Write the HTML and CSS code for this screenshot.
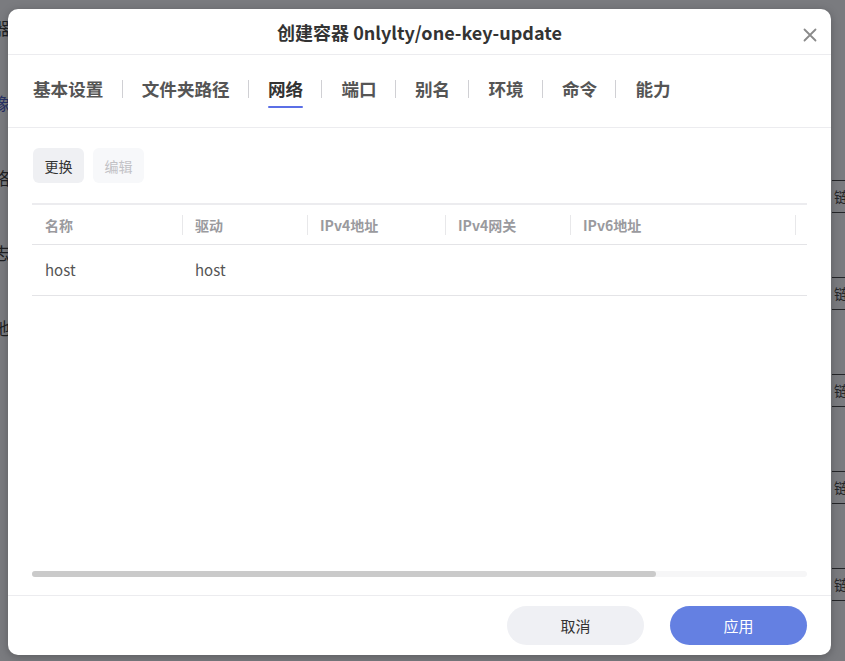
FILE: index.html
```html
<!DOCTYPE html>
<html lang="zh-CN">
<head>
<meta charset="utf-8">
<title>创建容器</title>
<link rel="stylesheet" href="styles.css">
</head>
<body>
<div class="page">
  <ul class="side">
    <li>容器</li>
    <li class="active">镜像</li>
    <li>网络</li>
    <li>日志</li>
    <li>本地</li>
  </ul>
  <div class="links">
    <span class="link">链接</span>
    <span class="link">链接</span>
    <span class="link">链接</span>
    <span class="link">链接</span>
    <span class="link">链接</span>
  </div>
</div>
<div class="mask"></div>
<div class="modal">
  <div class="modal-head">
    <h1 class="title">创建容器 0nlylty/one-key-update</h1>
    <button class="close" aria-label="关闭">
      <svg width="14" height="14" viewBox="0 0 14 14"><path d="M1.5 1.5 L12.5 12.5 M12.5 1.5 L1.5 12.5" stroke="#8a8a8a" stroke-width="1.8" fill="none" stroke-linecap="round"/></svg>
    </button>
  </div>
  <nav class="tabs">
    <span class="tab">基本设置</span><span class="sep"></span>
    <span class="tab">文件夹路径</span><span class="sep"></span>
    <span class="tab active">网络</span><span class="sep"></span>
    <span class="tab">端口</span><span class="sep"></span>
    <span class="tab">别名</span><span class="sep"></span>
    <span class="tab">环境</span><span class="sep"></span>
    <span class="tab">命令</span><span class="sep"></span>
    <span class="tab">能力</span>
  </nav>
  <div class="modal-body">
    <div class="toolbar">
      <button class="tbtn">更换</button>
      <button class="tbtn disabled">编辑</button>
    </div>
    <div class="scroller">
      <div class="viewport">
        <table class="grid">
          <colgroup>
            <col style="width:150px"><col style="width:125px"><col style="width:138px"><col style="width:125px"><col style="width:225px"><col style="width:200px">
          </colgroup>
          <thead>
            <tr>
              <th><span>名称</span></th>
              <th><span>驱动</span></th>
              <th><span>IPv4地址</span></th>
              <th><span>IPv4网关</span></th>
              <th><span>IPv6地址</span></th>
              <th><span>IPv6网关</span></th>
            </tr>
          </thead>
          <tbody>
            <tr>
              <td>host</td>
              <td>host</td>
              <td></td>
              <td></td>
              <td></td>
              <td></td>
            </tr>
          </tbody>
        </table>
      </div>
      <div class="hbar"><div class="thumb" style="width:80.5%"></div></div>
    </div>
  </div>
  <div class="modal-foot">
    <button class="btn cancel">取消</button>
    <button class="btn primary">应用</button>
  </div>
</div>
</body>
</html>
```
FILE: styles.css
```css
* { box-sizing: border-box; }
html, body { margin: 0; padding: 0; }
body {
  width: 845px;
  height: 661px;
  overflow: hidden;
  font-family: "Noto Sans CJK SC", "Noto Sans", sans-serif;
  background: #f4f5f7;
  position: relative;
}
.page {
  display: flex;
  justify-content: space-between;
  height: 661px;
}
.side {
  list-style: none;
  margin: 0;
  padding: 16px 0 0;
  width: 100px;
  margin-left: -90px;
  text-align: right;
  display: flex;
  flex-direction: column;
  gap: 51px;
  font-size: 17px;
  color: #111;
}
.side li { line-height: 24px; }
.side li.active { color: #2a3cb8; }
.links {
  display: flex;
  flex-direction: column;
  gap: 64px;
  padding-top: 180px;
  width: 13px;
}
.link {
  display: block;
  height: 33px;
  line-height: 31px;
  font-size: 15px;
  color: #222;
  border-top: 1px solid #222;
  border-bottom: 1px solid #222;
  white-space: nowrap;
  overflow: hidden;
  padding-left: 2px;
}
.mask {
  position: absolute;
  inset: 0;
  background: rgba(40, 41, 46, 0.6);
}
.modal {
  position: absolute;
  left: 8px;
  top: 9px;
  width: 823px;
  height: 646px;
  background: #fff;
  border-radius: 10px;
  display: flex;
  flex-direction: column;
  overflow: hidden;
  box-shadow: 0 2px 10px rgba(0,0,0,0.25);
}
.modal-head {
  height: 46px;
  border-bottom: 1px solid #ececef;
  display: flex;
  align-items: center;
  justify-content: center;
  position: relative;
  flex: none;
}
.title {
  margin: 0;
  font-size: 18px;
  font-weight: 700;
  color: #333;
  padding-top: 1px;
}
.close {
  position: absolute;
  right: 14px;
  top: 19px;
  width: 14px;
  height: 14px;
  padding: 0;
  border: 0;
  background: none;
  display: flex;
}
.tabs {
  height: 73px;
  border-bottom: 1px solid #ececef;
  display: flex;
  align-items: center;
  padding: 0 0 4px 25px;
  flex: none;
}
.tab {
  font-size: 17.6px;
  font-weight: 700;
  color: #555;
  line-height: 26px;
  position: relative;
}
.tab.active { color: #333; }
.tab.active::after {
  content: "";
  position: absolute;
  left: 0;
  right: 0;
  bottom: -6px;
  height: 2px;
  border-radius: 1px;
  background: #5b6fe6;
}
.sep {
  width: 1px;
  height: 18px;
  background: #d0d0d4;
  margin: 0 19px 0 18.3px;
}
.modal-body {
  flex: 1;
  display: flex;
  flex-direction: column;
  padding: 20px 24px 18px;
  min-height: 0;
  border-bottom: 1px solid #ececef;
}
.toolbar {
  display: flex;
  gap: 9px;
  padding-left: 1px;
  flex: none;
}
.tbtn {
  width: 51px;
  height: 35px;
  border: 0;
  border-radius: 6px;
  background: #eff0f3;
  color: #333;
  font-family: inherit;
  font-size: 14px;
  padding: 0;
}
.tbtn.disabled { background: #f7f8fa; color: #c2c2c6; }
.scroller {
  flex: 1;
  margin-top: 20px;
  display: flex;
  flex-direction: column;
  min-height: 0;
}
.viewport {
  flex: 1;
  overflow: hidden;
}
.hbar {
  height: 6px;
  flex: none;
  background: #f6f6f7;
  border-radius: 3px;
}
.thumb {
  height: 100%;
  background: #cacaca;
  border-radius: 3px;
}
.grid {
  border-collapse: collapse;
  table-layout: fixed;
  width: 963px;
  border-top: 2px solid #ececef;
}
.grid th {
  height: 40px;
  text-align: left;
  font-weight: 700;
  font-size: 14px;
  color: #9a9a9e;
  padding: 2px 0 0 13px;
  border-bottom: 1px solid #e4e4e7;
  position: relative;
}
.grid th + th::before {
  content: "";
  position: absolute;
  left: 0;
  top: 10px;
  height: 20px;
  width: 1px;
  background: #e8e8ea;
}
.grid td {
  height: 51px;
  padding: 0 0 0 13px;
  font-size: 15px;
  color: #555;
  border-bottom: 1px solid #e4e4e7;
}
.modal-foot {
  height: 59px;
  display: flex;
  justify-content: flex-end;
  align-items: center;
  gap: 26px;
  padding: 0 24px 0;
  flex: none;
}
.btn {
  width: 137px;
  height: 39px;
  border: 0;
  border-radius: 20px;
  font-family: inherit;
  font-size: 15px;
}
.btn.cancel { background: #eff0f4; color: #333; }
.btn.primary { background: #6480e2; color: #fff; }
```
